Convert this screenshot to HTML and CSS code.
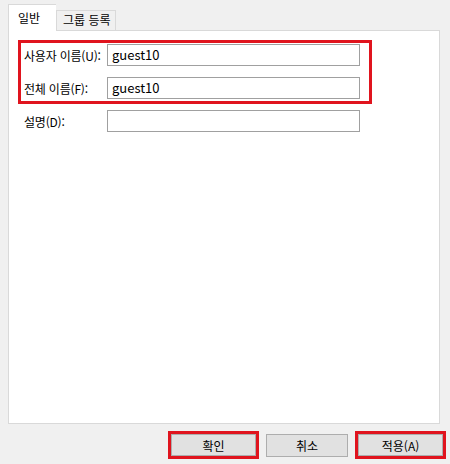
FILE: index.html
```html
<!DOCTYPE html>
<html lang="ko">
<head>
<meta charset="utf-8">
<link rel="stylesheet" href="styles.css">
</head>
<body>
<div class="dialog">
  <div class="tabs">
    <div class="tab active">일반</div>
    <div class="tab other">그룹 등록</div>
  </div>
  <div class="panel">
    <div class="highlight">
      <div class="row">
        <span class="label">사용자 이름(U):</span>
        <div class="field">guest10</div>
      </div>
      <div class="row">
        <span class="label">전체 이름(F):</span>
        <div class="field">guest10</div>
      </div>
    </div>
    <div class="row plain">
      <span class="label">설명(D):</span>
      <div class="field"></div>
    </div>
  </div>
  <div class="footer">
    <div class="mark"><div class="btn wide">확인</div></div>
    <div class="btn">취소</div>
    <div class="mark"><div class="btn wide">적용(A)</div></div>
  </div>
</div>
</body>
</html>
```
FILE: styles.css
```css
html, body {
  margin: 0;
  padding: 0;
  background: #f0f0f0;
}
body {
  font-family: "Noto Sans CJK KR", "Noto Sans", sans-serif;
  font-size: 12px;
  color: #000;
}
.dialog {
  width: 450px;
  height: 464px;
  padding-left: 8px;
  box-sizing: border-box;
}
.tabs {
  display: flex;
  align-items: flex-end;
  height: 30px;
  position: relative;
  z-index: 1;
}
.tab {
  border: 1px solid #d9d9d9;
  border-bottom: none;
  background: #f0f0f0;
  box-sizing: border-box;
  white-space: nowrap;
}
.tab.active {
  height: 27px;
  width: 48px;
  padding: 4px 0 0 9px;
  line-height: 18px;
  background: #fff;
  margin-bottom: -1px;
  border-right: none;
}
.tab.other {
  width: 60px;
  height: 20px;
  line-height: 18px;
  padding: 0 0 0 6px;
}
.panel {
  width: 432px;
  height: 394px;
  background: #fff;
  border: 1px solid #d9d9d9;
  box-sizing: border-box;
  padding: 9px 0 0 9px;
}
.highlight {
  width: 354px;
  box-sizing: border-box;
  border: 3px solid #e0141e;
  padding: 1px 0 2px 3px;
  display: flex;
  flex-direction: column;
  gap: 11px;
}
.row {
  display: flex;
  align-items: center;
  height: 22px;
}
.row.plain {
  margin-top: 6px;
  padding-left: 6px;
}
.label {
  width: 83px;
  box-sizing: border-box;
  white-space: nowrap;
  letter-spacing: -0.2px;
}
.field {
  width: 253px;
  height: 22px;
  box-sizing: border-box;
  border: 1px solid #a0a0a0;
  background: #fff;
  font-size: 13px;
  line-height: 19px;
  padding-left: 4px;
}
.footer {
  display: flex;
  justify-content: flex-end;
  align-items: flex-start;
  gap: 7px;
  width: 438px;
  padding-top: 7px;
}
.mark {
  border: 3px solid #e0141e;
  box-sizing: border-box;
  width: 91px;
  height: 28px;
}
.btn {
  width: 82px;
  height: 23px;
  margin-top: 3px;
  box-sizing: border-box;
  border: 1px solid #adadad;
  background: #e1e1e1;
  display: flex;
  align-items: center;
  justify-content: center;
}
.btn.wide {
  width: 85px;
  height: 22px;
  margin-top: 0;
}
```
